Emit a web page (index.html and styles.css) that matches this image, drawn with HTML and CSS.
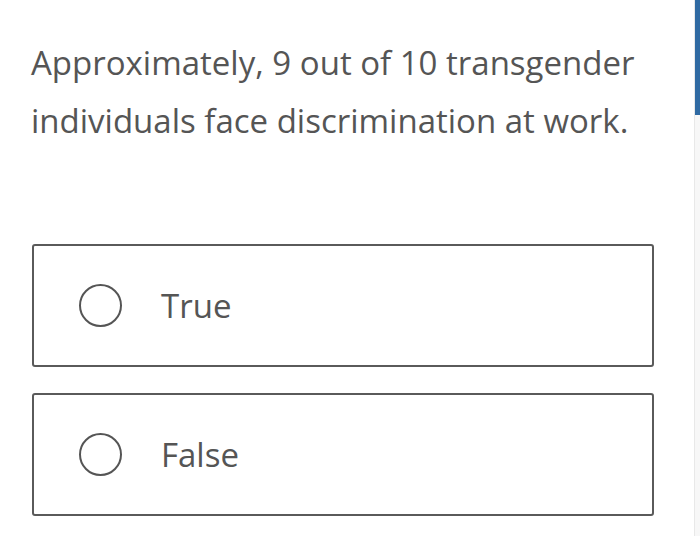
FILE: index.html
```html
<!DOCTYPE html>
<html>
<head>
<meta charset="utf-8">
<link rel="stylesheet" href="styles.css">
</head>
<body>
<div class="page">
  <main class="content">
    <p class="question">Approximately, 9 out of 10 transgender individuals face discrimination at work.</p>
    <div class="options">
      <label class="option"><span class="radio"></span><span class="label">True</span></label>
      <label class="option"><span class="radio"></span><span class="label">False</span></label>
    </div>
  </main>
  <div class="scrollbar"><div class="thumb"></div></div>
</div>
</body>
</html>
```
FILE: styles.css
```css
html, body {
  margin: 0;
  padding: 0;
  background: #fff;
}
.page {
  display: flex;
  width: 700px;
  height: 536px;
  overflow: hidden;
}
.content {
  flex: 1;
  font-family: "Open Sans", sans-serif;
  color: #555;
}
.question {
  margin: 0;
  padding: 34px 30px 0 31px;
  font-size: 33px;
  line-height: 58px;
}
.options {
  display: flex;
  flex-direction: column;
  gap: 26px;
  margin: 94px 40px 0 32px;
}
.option {
  display: flex;
  align-items: center;
  height: 123px;
  box-sizing: border-box;
  border: 2px solid #5a5a5a;
  border-radius: 3px;
  padding-left: 45px;
}
.radio {
  width: 43px;
  height: 43px;
  box-sizing: border-box;
  border: 2px solid #555;
  border-radius: 50%;
}
.label {
  margin-left: 39px;
  font-size: 33px;
  color: #555;
}
.scrollbar {
  width: 5px;
  border-left: 1px solid #e8e8e8;
  background: #f7f7f7;
}
.thumb {
  height: 115px;
  background: #2f6aa3;
}
```
